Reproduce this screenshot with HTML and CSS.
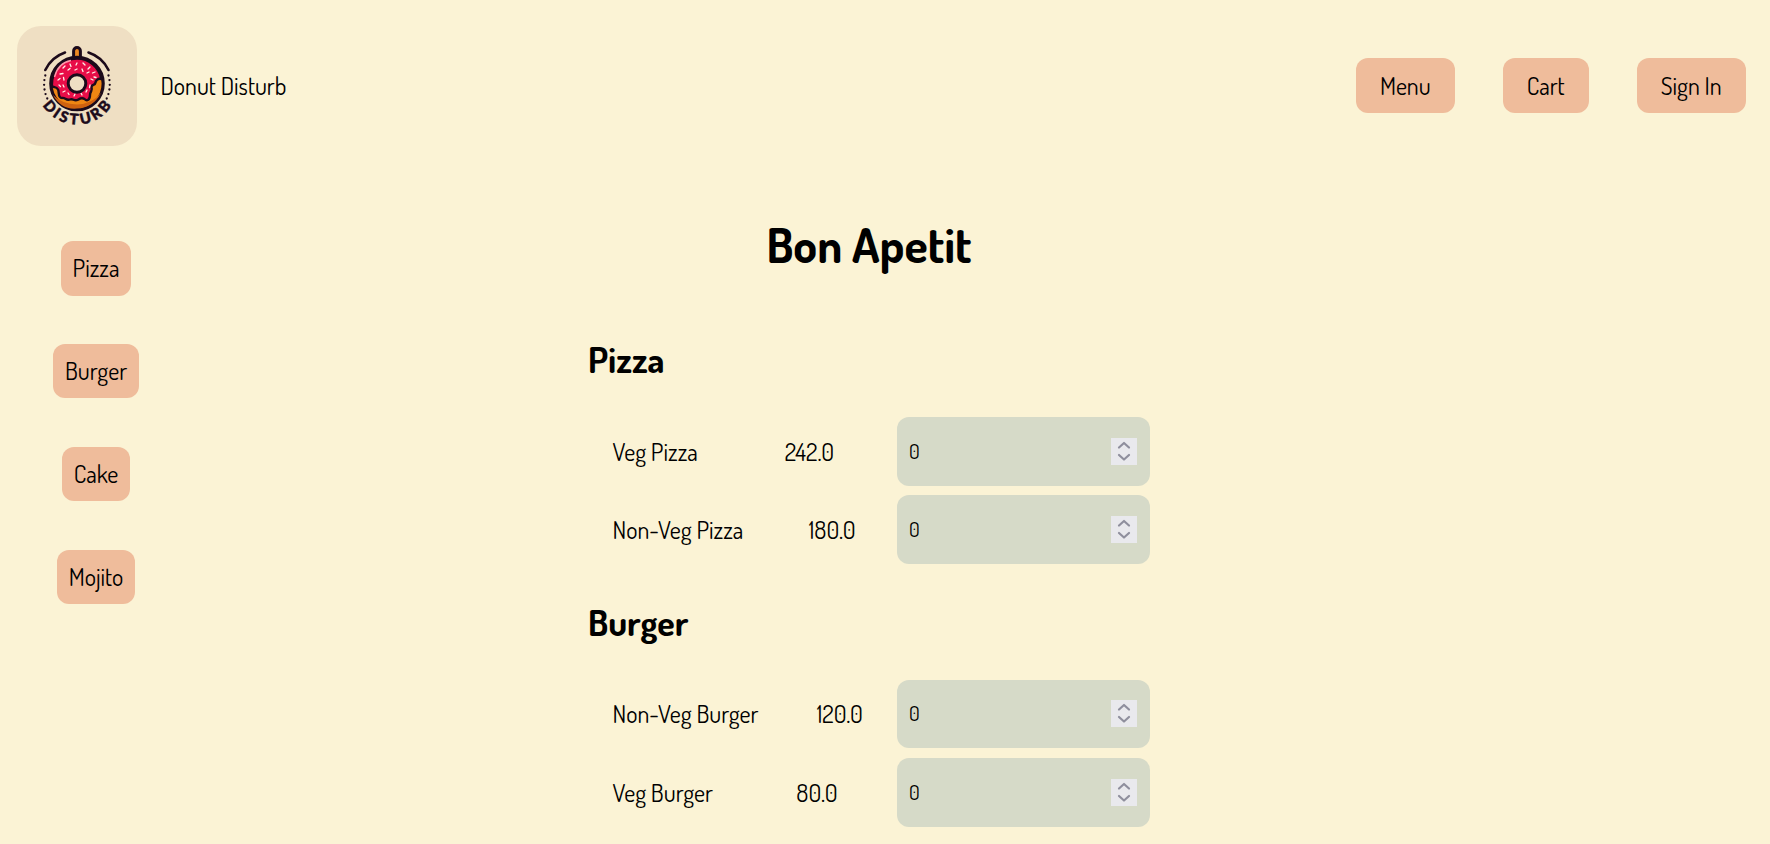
FILE: index.html
```html
<!DOCTYPE html>
<html lang="en">
<head>
<meta charset="utf-8">
<title>Donut Disturb</title>
<link rel="stylesheet" href="styles.css">
</head>
<body>
<header class="header">
  <div class="brand">
    <svg class="logo" viewBox="0 0 120 120" width="120" height="120">
      <g fill="none" stroke="#1c0b1b" stroke-linecap="round">
        <path d="M28.300 44A34 34 0 0 1 48 26.500M71.500 26.500A34 34 0 0 1 91.500 44" stroke-width="2.600"/>
        <path d="M28.300 49.500A33.500 33.500 0 0 0 31 74M91.500 49.500A33.500 33.500 0 0 1 89 74" stroke-width="2.300" stroke-dasharray="0 4.700"/>
      </g>
      <path d="M56.600 34V25a3.400 3.400 0 0 1 6.800 0V34z" fill="#ef8a22" stroke="#1c0b1b" stroke-width="3"/>
      <circle cx="60" cy="57.500" r="26.200" fill="#ef8613" stroke="#1c0b1b" stroke-width="3.200"/>
      <path d="M36 69Q44 84 60 82.500Q76 82 84 67Q75 78 60 78.500Q45 78 36 69Z" fill="#cf6210"/>
      <path d="M34.800 60C34.500 43 46 32.500 60 32.500C72 32.500 82 41 84.500 53C81 52 79 54 78.500 56.500C78 60 74.500 57.500 74.500 61.500C76 65 73 65 73 69C73 74 70 75.500 67.500 73C64.500 71 63 72.500 60.500 74C57 75.500 56 72 53 73.500C49 75 48 71 45 72C40.500 72 42.500 66 41 63.500C39 60 37 62 34.800 60Z" fill="#e80d48" stroke="#1c0b1b" stroke-width="2.400"/>
      <path d="M37.500 51Q41 37 54 34.500" fill="none" stroke="#ff96a8" stroke-width="1.400"/>
      <g stroke="#fff2e8" stroke-width="1.300" stroke-linecap="round">
        <path d="M46 42l2-2M53 38l1 2.500M60 37l-1 2M66 37l2 2M73 41l-2 2M78 46l-2.500 1M43 48l3-.5M51 44l2-1.500M58 44l2-1M65 43l1 2.500M70 47l2-1M41 54l2-1.500M47 54l-.5-2.500M74 53l2 1M77 51l2 .5M42 59l1.500 1.500M47 61l-1-2M46 66l2-1M51 67l1 1.500M57 70l1-2M65 69l-1-2M69 66l1-2M73 59l-.5 2.500"/>
      </g>
      <circle cx="60" cy="57.500" r="8.800" fill="#efdfc3" stroke="#1c0b1b" stroke-width="3"/>
      <path id="logo-arc" d="M25 78.500A40.500 40.500 0 0 0 95 78.500" fill="none"/>
      <text class="logo-text"><textPath href="#logo-arc" startOffset="1" textLength="82" lengthAdjust="spacing">DISTURB</textPath></text>
    </svg>
    <span class="brand-name">Donut Disturb</span>
  </div>
  <nav class="nav">
    <a class="button wide">Menu</a>
    <a class="button wide">Cart</a>
    <a class="button wide">Sign In</a>
  </nav>
</header>
<div class="page">
  <aside class="side">
    <a class="button">Pizza</a>
    <a class="button">Burger</a>
    <a class="button">Cake</a>
    <a class="button">Mojito</a>
  </aside>
  <main class="menu">
    <h1 class="title">Bon Apetit</h1>
    <section class="group">
      <h2 class="heading">Pizza</h2>
      <div class="item">
        <span class="name">Veg Pizza</span>
        <span class="price">242.0</span>
        <div class="quantity"><span>0</span><svg class="spinner" width="26" height="27"><path d="M8 9.500l5-4.500 5 4.500M8 17l5 4.500 5-4.500"/></svg></div>
      </div>
      <div class="item">
        <span class="name">Non-Veg Pizza</span>
        <span class="price">180.0</span>
        <div class="quantity"><span>0</span><svg class="spinner" width="26" height="27"><path d="M8 9.500l5-4.500 5 4.500M8 17l5 4.500 5-4.500"/></svg></div>
      </div>
    </section>
    <section class="group">
      <h2 class="heading">Burger</h2>
      <div class="item">
        <span class="name">Non-Veg Burger</span>
        <span class="price">120.0</span>
        <div class="quantity"><span>0</span><svg class="spinner" width="26" height="27"><path d="M8 9.500l5-4.500 5 4.500M8 17l5 4.500 5-4.500"/></svg></div>
      </div>
      <div class="item">
        <span class="name">Veg Burger</span>
        <span class="price">80.0</span>
        <div class="quantity"><span>0</span><svg class="spinner" width="26" height="27"><path d="M8 9.500l5-4.500 5 4.500M8 17l5 4.500 5-4.500"/></svg></div>
      </div>
    </section>
  </main>
</div>
</body>
</html>
```
FILE: styles.css
```css
* { box-sizing: border-box; }
body {
  margin: 0;
  height: 844px;
  overflow: hidden;
  background: #fbf3d5;
  color: #000;
  font-family: Dosis, Lato, sans-serif;
  font-size: 24px;
  line-height: 1.264;
}
.header {
  display: flex;
  justify-content: space-between;
  align-items: center;
  padding: 25.500px 24.400px 0 16.600px;
}
.brand { display: flex; align-items: center; gap: 23.800px; }
.brand-name { padding-top: 1.500px; }
.logo { display: block; border-radius: 24px; background: #efdfc3; }
.logo-text {
  font-family: Lato, sans-serif;
  font-size: 15px;
  font-weight: 900;
  fill: #1c0b1b;
  stroke: #1c0b1b;
  stroke-width: 0.500;
  stroke-linejoin: round;
}
.nav { display: flex; gap: 48px; }
.button {
  display: block;
  padding: 12px;
  border-radius: 12px;
  background: #efbc9b;
}
.button.wide { padding: 12.600px 24px 11.800px; }
.page { display: flex; }
.side {
  display: flex;
  flex-direction: column;
  align-items: center;
  gap: 48.400px;
  width: 192px;
  padding-top: 95.900px;
}
.menu { width: 562px; margin-left: 396px; padding-top: 68px; }
.title { margin: 0; font-size: 48px; text-align: center; }
.heading { margin: 0 0 34.500px; font-size: 36px; }
.group { padding-top: 62.700px; }
.group + .group { padding-top: 35.500px; }
.item {
  display: flex;
  justify-content: space-between;
  align-items: center;
  height: 68.700px;
  margin-bottom: 9.800px;
  padding-left: 24.500px;
}
.item:last-child { margin-bottom: 0; }
.name { margin-right: 24px; }
.name, .price { padding-top: 1.200px; }
.quantity {
  display: flex;
  justify-content: space-between;
  align-items: center;
  width: 253px;
  height: 68.700px;
  padding: 0 13px 0 12px;
  border-radius: 12px;
  background: #d6dac8;
  font-size: 20px;
}
.spinner {
  background: #e9e9ed;
  fill: none;
  stroke: #8f8f9d;
  stroke-width: 2.200;
  stroke-linecap: round;
  stroke-linejoin: round;
}
```
